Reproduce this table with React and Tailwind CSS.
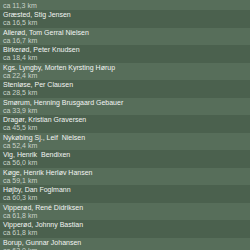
const rows = [
  ['\u00a0', 'ca 11,3 km'],
  ['Græsted, Stig Jensen', 'ca 16,5 km'],
  ['Allerød, Tom Gerral Nielsen', 'ca 16,7 km'],
  ['Birkerød, Peter Knudsen', 'ca 18,4 km'],
  ['Kgs. Lyngby, Morten Kyrsting Hørup', 'ca 22,4 km'],
  ['Stenløse, Per Clausen', 'ca 28,5 km'],
  ['Smørum, Henning Brusgaard Gebauer', 'ca 33,9 km'],
  ['Dragør, Kristian Graversen', 'ca 45,5 km'],
  ['Nykøbing Sj., Leif  Nielsen', 'ca 52,4 km'],
  ['Vig, Henrik  Bendixen', 'ca 56,0 km'],
  ['Køge, Henrik Herløv Hansen', 'ca 59,1 km'],
  ['Højby, Dan Foglmann', 'ca 60,3 km'],
  ['Vipperød, René Didriksen', 'ca 61,8 km'],
  ['Vipperød, Johnny Bastian', 'ca 61,8 km'],
  ['Borup, Gunnar Johansen', 'ca 62,0 km'],
];

export default function App() {
  return (
    <div className="w-[250px] h-[250px] overflow-hidden bg-[#4d6350] font-['Liberation_Sans',Arial,sans-serif]">
      <div className="-mt-[7.5px] flex flex-col">
        {rows.map(([name, dist], i) => (
          <div
            key={i}
            className={`h-[17.5px] shrink-0 px-[3px] pt-[1px] text-[7px] leading-[8px] whitespace-pre ${
              i % 2 === 0 ? 'bg-[#576e5a]' : 'bg-[#4b614e]'
            }`}
          >
            <div className="text-[#f2f4f2]">{name}</div>
            <div className="text-[#c9d2c9]">{dist}</div>
          </div>
        ))}
      </div>
    </div>
  );
}
